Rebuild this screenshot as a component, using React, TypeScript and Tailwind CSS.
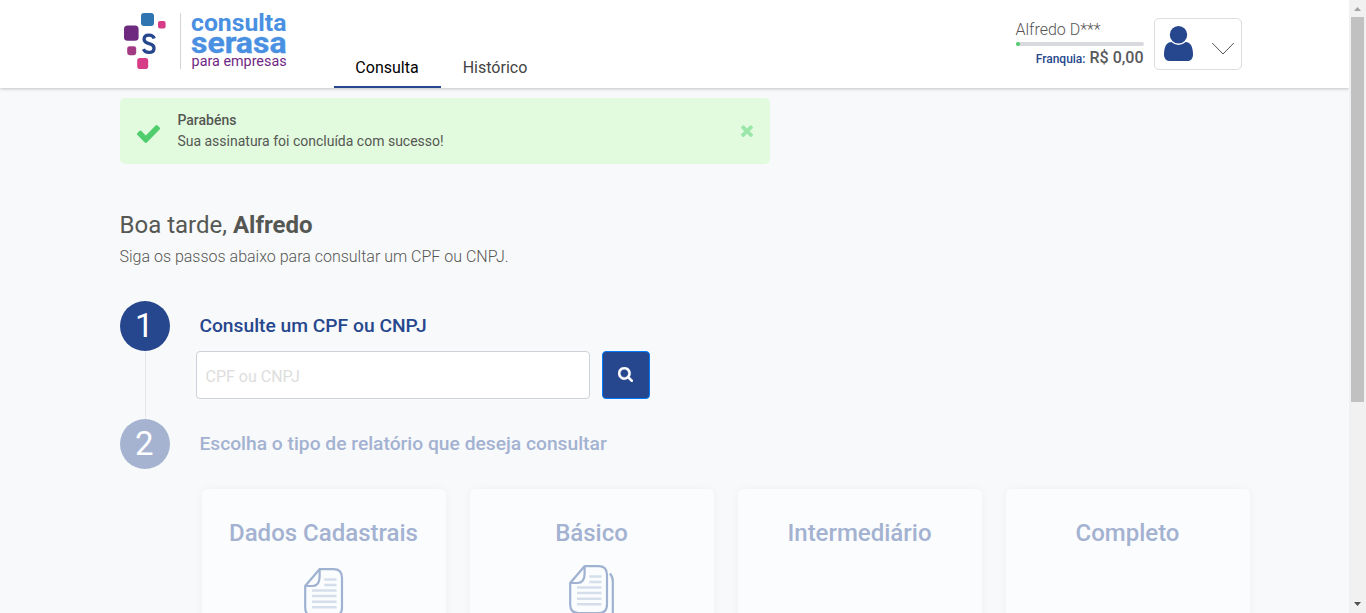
import React from "react";

const FONT = "font-['Roboto','Liberation_Sans',sans-serif]";

function Logo() {
  return (
    <svg width="170" height="76" viewBox="120 0 170 76" className="block shrink-0 overflow-visible">
      <rect x="141" y="13" width="13" height="13" rx="3" fill="#2f75b2" />
      <rect x="158" y="21" width="7.6" height="7.6" rx="2" fill="#d63d86" />
      <rect x="124" y="25.4" width="14.6" height="15.4" rx="3.6" fill="#6d2a7e" />
      <rect x="127.2" y="46.2" width="9" height="9" rx="2.4" fill="#a23a84" />
      <rect x="137.2" y="58" width="11" height="11" rx="2.8" fill="#d63d86" />
      <path
        d="M154.2 38.6C153.5 36.3 151.7 35.2 149 35.2C145.9 35.2 144.1 36.8 144.1 39.2C144.1 41.6 145.6 42.7 149.1 43.6C152.6 44.5 154 45.8 154 48.2C154 50.9 151.9 52.4 148.9 52.4C146.1 52.4 144.3 51.3 143.4 49.2"
        fill="none"
        stroke="#26478d"
        strokeWidth="3.3"
      />
      <rect x="180" y="13" width="1" height="56" fill="#d3d4d7" />
      <g fontFamily="Roboto, 'Liberation Sans', sans-serif">
        <text x="191" y="30.6" fontSize="23" fontWeight="700" fill="#4a90e2" textLength="95.5" lengthAdjust="spacingAndGlyphs">consulta</text>
        <text x="191" y="53" fontSize="30" fontWeight="700" fill="#4a90e2" stroke="#4a90e2" strokeWidth="0.4" textLength="95.5" lengthAdjust="spacingAndGlyphs">serasa</text>
        <text x="191.6" y="66" fontSize="13.8" fontWeight="400" fill="#702784" textLength="95" lengthAdjust="spacingAndGlyphs">para empresas</text>
      </g>
    </svg>
  );
}

function DocIcon({ stacked = false }: { stacked?: boolean }) {
  return (
    <svg width={stacked ? 46 : 40} height="60" viewBox={stacked ? "0 0 46 60" : "0 0 40 60"} fill="none" className="block">
      <g stroke="#9fb2d1" strokeWidth="2.2">
        <path d="M15.6 1.2H29.5Q38 1.2 38 9.7V39.5Q38 48 29.5 48H9.5Q1.2 48 1.2 39.5V18Z" />
        <path d="M15.6 1.2V8.5Q15.6 18 8.5 18H1.2" />
        {stacked && <path d="M40.8 8.4Q43.8 11.5 43.8 16V50" />}
      </g>
      <path d="M20.3 11.5H32.5M20.3 17H32.5M8 22.5H32.5M8 28H32.5M8 33.7H32.5M8 39.2H32.5" stroke="#d5deeb" strokeWidth="2.6" />
    </svg>
  );
}

function Header() {
  return (
    <header className="relative flex h-[88px] shrink-0 bg-white pl-[120px] shadow-[0_1px_3px_rgba(0,0,0,0.22)]">
      <Logo />
      <nav className="ml-11 flex items-end text-base">
        <a className="flex h-[42px] w-[107px] justify-center border-b-2 border-[#26478d] pr-px pt-[10px] leading-6 text-black">Consulta</a>
        <a className="flex h-[42px] w-[108px] justify-center pt-[10px] leading-6 text-[#444]">Histórico</a>
      </nav>
      <div className="ml-[467px] w-32 pt-[18px]">
        <div className="-ml-[0.5px] h-6 text-base font-light leading-[23px] text-[#555]">Alfredo D***</div>
        <div className="h-1 rounded-full bg-[#d8d9dc]">
          <div className="h-1 w-1 rounded-full bg-[#50cd6d]" />
        </div>
        <div className="flex items-baseline justify-end gap-1 pr-[0.5px] leading-[23px] text-[#58595b]">
          <span className="text-xs font-medium text-[#26478d]">Franquia:</span>
          <span className="text-base font-medium">R$ 0,00</span>
        </div>
      </div>
      <button className="ml-[10px] mt-[18px] flex h-[52px] w-[88px] items-start rounded-[5px] border border-[#dcdddf] pl-[9px] pt-[7px]">
        <svg width="29" height="35" viewBox="256 128 1280 1536" preserveAspectRatio="none" fill="#26478d">
          <path d="M1536 1399q0 109-62.5 187t-150.5 78h-854q-88 0-150.5-78t-62.5-187q0-85 8.5-160.5t31.5-152 58.5-131 94-89 134.5-34.5q131 128 313 128t313-128q76 0 134.5 34.5t94 89 58.5 131 31.5 152 8.5 160.5zm-256-887q0 159-112.5 271.5t-271.5 112.5-271.5-112.5-112.5-271.5 112.5-271.5 271.5-112.5 271.5 112.5 112.5 271.5z" />
        </svg>
        <svg width="24" height="14" viewBox="0 0 24 14" className="ml-[18px] mt-4" fill="none" stroke="#555" strokeWidth="1">
          <path d="M1.2 1L12 12L22.8 1" />
        </svg>
      </button>
    </header>
  );
}

function Alert() {
  return (
    <div className="mt-[10px] flex h-[66px] w-[650px] rounded-[5px] bg-[#e2fbde] pl-[17px] text-sm text-[#555753]">
      <svg width="23" height="18" viewBox="121 334 1550 1188" preserveAspectRatio="none" fill="#50cd6d" className="mt-[27px]">
        <path d="M1671 566q0 40-28 68l-724 724-136 136q-28 28-68 28t-68-28l-136-136-362-362q-28-28-28-68t28-68l136-136q28-28 68-28t68 28l294 295 656-657q28-28 68-28t68 28l136 136q28 28 28 68z" />
      </svg>
      <div className="ml-[17.4px] flex-1 pt-3 leading-[21px]">
        <div className="font-medium">Parabéns</div>
        <div>Sua assinatura foi concluída com sucesso!</div>
      </div>
      <svg width="12" height="12" viewBox="302 334 1188 1220" preserveAspectRatio="none" fill="#9be6a9" className="mr-[17px] mt-[27px]">
        <path d="M1490 1322q0 40-28 68l-136 136q-28 28-68 28t-68-28l-294-294-294 294q-28 28-68 28t-68-28l-136-136q-28-28-28-68t28-68l294-294-294-294q-28-28-28-68t28-68l136-136q28-28 68-28t68 28l294 294 294-294q28-28 68-28t68 28l136 136q28 28 28 68t-28 68l-294 294 294 294q28 28 28 68z" />
      </svg>
    </div>
  );
}

function ReportCard({ title, children }: { title: string; children?: React.ReactNode }) {
  return (
    <div className="flex h-[300px] w-[244px] flex-col items-center rounded-md bg-[#fbfcfd] pt-[26px] shadow-[0_0_8px_rgba(0,0,0,0.045)]">
      <h3 className="pr-[1px] text-2xl font-medium leading-9 text-[#a3b2d1]">{title}</h3>
      {children}
    </div>
  );
}

function Scrollbar() {
  return (
    <div className="flex h-full w-[17px] shrink-0 flex-col items-center bg-[#f1f1f1]">
      <svg width="17" height="17" viewBox="0 0 17 17" fill="#a3a3a3">
        <path d="M5 11L8.5 7L12 11Z" />
      </svg>
      <div className="h-[385px] w-[13px] bg-[#c1c1c1]" />
      <svg width="17" height="17" viewBox="0 0 17 17" fill="#505050" className="mt-auto">
        <path d="M5 6H12L8.5 10Z" />
      </svg>
    </div>
  );
}

export default function App() {
  return (
    <div className={`${FONT} flex h-[613px] w-[1366px] overflow-hidden bg-[#f8f9fb]`}>
      <div className="flex h-full w-[1349px] flex-col overflow-hidden">
        <Header />
        <main className="pl-[120px]">
          <Alert />
          <h1 className="-ml-[0.5px] mt-[43px] text-2xl leading-9 text-[#555753]">
            Boa tarde, <b className="font-bold">Alfredo</b>
          </h1>
          <p className="-ml-[0.5px] mt-[2px] text-base font-light leading-6 text-[#555753]">Siga os passos abaixo para consultar um CPF ou CNPJ.</p>

          <section className="mt-8 flex h-[118px]">
            <div className="flex w-[50px] flex-col items-center">
              <div className="flex h-[50px] w-[50px] shrink-0 items-center justify-center rounded-full bg-[#26478d] pr-[1.5px] text-[33px] text-white">1</div>
              <div className="ml-px w-px flex-1 bg-[#e6e7ea]" />
            </div>
            <div className="ml-[26px]">
              <h2 className="h-[50px] pl-[3.4px] text-[19.24px] font-medium leading-[49px] text-[#26478d]">Consulte um CPF ou CNPJ</h2>
              <div className="flex gap-3">
                <input
                  placeholder="CPF ou CNPJ"
                  className="h-12 w-[394px] rounded border border-[#ced1d8] bg-white pl-[8.5px] pt-[3px] text-base placeholder:text-[#dddddd]"
                />
                <button className="flex h-12 w-12 items-center justify-center rounded border border-[#007bff] bg-[#26478d] pb-px pr-[1px]">
                  <svg width="15" height="15" viewBox="64 128 1664 1664" fill="white" stroke="white" strokeWidth="40">
                    <path d="M1216 832q0-185-131.5-316.5t-316.5-131.5-316.5 131.5-131.5 316.5 131.5 316.5 316.5 131.5 316.5-131.5 131.5-316.5zm512 832q0 52-38 90t-90 38q-54 0-90-38l-343-342q-179 124-399 124-143 0-273.5-55.5t-225-150-150-225-55.5-273.5 55.5-273.5 150-225 225-150 273.5-55.5 273.5 55.5 225 150 150 225 55.5 273.5q0 220-124 399l343 343q37 37 37 90z" />
                  </svg>
                </button>
              </div>
            </div>
          </section>

          <section className="flex h-[50px]">
            <div className="flex h-[50px] w-[50px] items-center justify-center rounded-full bg-[#a5b3d1] pr-[1.5px] text-[33px] text-white">2</div>
            <h2 className="ml-[29.4px] text-[19.24px] font-medium leading-[49px] text-[#a3b2d1]">Escolha o tipo de relatório que deseja consultar</h2>
          </section>

          <div className="ml-[82px] mt-5 flex gap-6">
            <ReportCard title="Dados Cadastrais">
              <div className="mt-[17px] pl-[0.8px]">
                <DocIcon />
              </div>
            </ReportCard>
            <ReportCard title="Básico">
              <div className="mt-[14px] pl-[0.8px]">
                <DocIcon stacked />
              </div>
            </ReportCard>
            <ReportCard title="Intermediário" />
            <ReportCard title="Completo" />
          </div>
        </main>
      </div>
      <Scrollbar />
    </div>
  );
}
